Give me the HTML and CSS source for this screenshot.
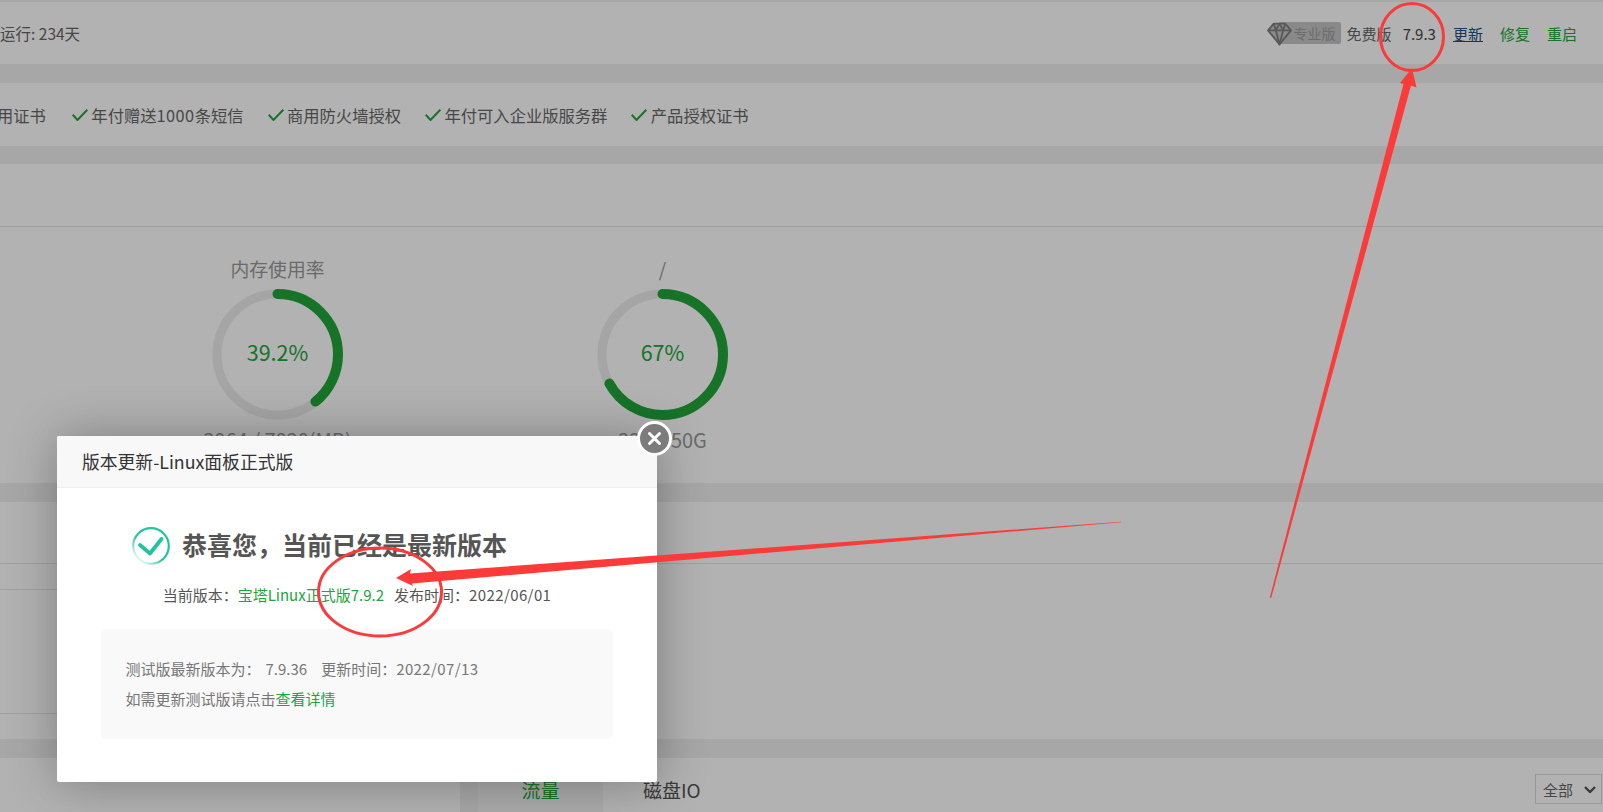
FILE: index.html
```html
<!DOCTYPE html>
<html lang="zh-CN">
<head>
<meta charset="utf-8">
<title>版本更新</title>
<link rel="stylesheet" href="styles.css">
</head>
<body>
<main class="page">
  <section class="card topbar">
    <span class="uptime">运行: 234天</span>
    <div class="status">
      <span class="pro">
        <svg class="pro-gem" width="25" height="25" viewBox="0 0 24 24" fill="#c4c4c4" stroke="#808080" stroke-width="1.8" stroke-linejoin="round"><path d="M6.5 2.5h11L23 9 12 22.5 1 9z"/><path d="M1 9h22M6.5 2.5 8.500 9 12 22.500 15.500 9l2-6.500M8.500 9 12 2.500 15.500 9" fill="none"/></svg>
        <span class="pro-label">专业版</span>
      </span>
      <span class="free">免费版</span>
      <span class="version">7.9.3</span>
      <a class="link update">更新</a>
      <a class="link green">修复</a>
      <a class="link green">重启</a>
    </div>
  </section>

  <section class="card features">
    <span class="feature">用证书</span>
    <span class="feature"><svg class="tick" width="16" height="12" viewBox="0 0 16 12"><path d="M.7 5.800 5.500 11 15.300.7"/></svg><span>年付赠送<span class="digits">1000</span>条短信</span></span>
    <span class="feature"><svg class="tick" width="16" height="12" viewBox="0 0 16 12"><path d="M.7 5.800 5.500 11 15.300.7"/></svg>商用防火墙授权</span>
    <span class="feature"><svg class="tick" width="16" height="12" viewBox="0 0 16 12"><path d="M.7 5.800 5.500 11 15.300.7"/></svg>年付可入企业版服务群</span>
    <span class="feature"><svg class="tick" width="16" height="12" viewBox="0 0 16 12"><path d="M.7 5.800 5.500 11 15.300.7"/></svg>产品授权证书</span>
  </section>

  <section class="card usage">
    <div class="card-head"></div>
    <div class="dials">
      <div class="dial">
        <div class="dial-title">内存使用率</div>
        <div class="ring">
          <svg width="131" height="131" viewBox="0 0 131 131"><circle class="ring-track" cx="65.500" cy="65.500" r="60.500"/><circle class="ring-value" cx="65.500" cy="65.500" r="60.500" pathLength="100" stroke-dasharray="39.2 100" transform="rotate(-90 65.500 65.500)"/></svg>
          <span class="ring-label">39.2%</span>
        </div>
        <div class="dial-foot">3064 / 7820(MB)</div>
      </div>
      <div class="dial">
        <div class="dial-title">/</div>
        <div class="ring">
          <svg width="131" height="131" viewBox="0 0 131 131"><circle class="ring-track" cx="65.500" cy="65.500" r="60.500"/><circle class="ring-value" cx="65.500" cy="65.500" r="60.500" pathLength="100" stroke-dasharray="67 100" transform="rotate(-90 65.500 65.500)"/></svg>
          <span class="ring-label">67%</span>
        </div>
        <div class="dial-foot">33G / 50G</div>
      </div>
    </div>
  </section>

  <section class="card software">
    <div class="software-head"></div>
    <div class="software-row first"></div>
    <div class="software-row second"></div>
  </section>

  <div class="bottom">
    <section class="card overview"></section>
    <section class="card traffic">
      <span class="tab active">流量</span>
      <span class="tab">磁盘IO</span>
      <span class="picker">全部<svg width="12" height="7" viewBox="0 0 12 7"><path d="M1 1l5 5 5-5"/></svg></span>
    </section>
  </div>
</main>

<div class="shade"></div>

<div class="dialog">
  <button class="dialog-close" type="button" aria-label="关闭">
    <svg width="35" height="35" viewBox="0 0 35 35"><circle cx="17.500" cy="17.500" r="16" fill="#7c7c7c" stroke="#fff" stroke-width="3"/><path d="M12.500 12.500l10 10M22.500 12.500l-10 10" stroke="#fff" stroke-width="3" stroke-linecap="round"/></svg>
  </button>
  <header class="dialog-head">版本更新-Linux面板正式版</header>
  <div class="dialog-body">
    <div class="result">
      <svg width="38" height="38" viewBox="0 0 38 38">
        <defs><linearGradient id="ringFade" x1="0.900" y1="0.100" x2="0.200" y2="0.900"><stop offset="0" stop-color="#20c4a0"/><stop offset="0.600" stop-color="#20c4a0"/><stop offset="1" stop-color="#20c4a0" stop-opacity="0.150"/></linearGradient></defs>
        <circle cx="19" cy="19" r="17.800" fill="none" stroke="url(#ringFade)" stroke-width="2.200"/>
        <path d="M8 18l10 8.500L29.500 12" fill="none" stroke="#20c4a0" stroke-width="3.800" stroke-linecap="round" stroke-linejoin="round"/>
      </svg>
      <h1 class="result-title">恭喜您，当前已经是最新版本</h1>
    </div>
    <p class="current">当前版本：<span class="accent">宝塔Linux正式版7.9.2</span><span class="published">发布时间：<span class="date">2022/06/01</span></span></p>
    <div class="beta">
      <p>测试版最新版本为：<span class="beta-num">7.9.36</span><span class="beta-time">更新时间：<span class="date">2022/07/13</span></span></p>
      <p>如需更新测试版请点击<a class="accent">查看详情</a></p>
    </div>
  </div>
</div>

<svg class="marks" width="1603" height="812" viewBox="0 0 1603 812">
  <ellipse cx="1412" cy="37" rx="31.500" ry="33.500"/>
  <ellipse cx="380" cy="592" rx="61.500" ry="44"/>
  <polygon points="1412,68 1416.500,87.500 1411,85.500 1271.200,598 1269.800,597.500 1403.500,84 1400,83"/>
  <polygon points="396,578 411,569 410,573.500 1121,521.800 1121,522.200 412,583.500 413,586"/>
</svg>
</body>
</html>
```
FILE: styles.css
```css
* { box-sizing: border-box; }
html, body { margin: 0; height: 100%; }
body {
  width: 1603px;
  height: 812px;
  overflow: hidden;
  position: relative;
  background: #f0f0f0;
  font-family: "Noto Sans CJK SC", "Liberation Sans", sans-serif;
  font-size: 15px;
  color: #666;
}
.page { padding-top: 2px; height: 812px; overflow: hidden; }
.card { background: #fff; }

.topbar {
  height: 62px;
  margin-bottom: 19px;
  display: flex;
  align-items: center;
  justify-content: space-between;
  padding-right: 26px;
}
.uptime { font-size: 15.500px; }
.status { display: flex; align-items: center; }
.pro { display: inline-flex; align-items: center; margin-right: 6px; }
.pro-gem { position: relative; z-index: 1; }
.pro-label {
  margin-left: -13px;
  padding: 0 5px 0 15px;
  height: 22px;
  line-height: 22px;
  font-size: 14px;
  color: #9c9c9c;
  background: #c4c4c4;
  border-radius: 2px;
}
.free { color: #666; }
.version { margin: 0 17px 0 11px; color: #444; }
.link { margin-right: 17px; }
.link:last-child { margin-right: 0; }
.update { color: #1f4f82; text-decoration: underline; }
.green { color: #20a53a; }

.features {
  height: 63px;
  margin-bottom: 18px;
  display: flex;
  align-items: center;
  gap: 24px;
  font-size: 16.300px;
}
.feature { display: inline-flex; align-items: center; gap: 3.500px; white-space: nowrap; }
.feature:first-child { margin-left: -3px; margin-right: 2px; }
.digits { letter-spacing: .5px; }
.tick { fill: none; stroke: #20a53a; stroke-width: 2; }

.usage { height: 319px; margin-bottom: 19px; }
.card-head { height: 63px; border-bottom: 1px solid #e6e6e6; }
.dials { display: flex; padding: 29px 0 0 85px; }
.dial { width: 385px; display: flex; flex-direction: column; align-items: center; color: #999; }
.dial-title { font-size: 18.800px; line-height: 26px; }
.ring { position: relative; width: 131px; height: 131px; margin-top: 7px; }
.ring svg { display: block; }
.ring-track { fill: none; stroke: #ececec; stroke-width: 9; }
.ring-value { fill: none; stroke: #20a53a; stroke-width: 10; stroke-linecap: round; }
.ring-label {
  position: absolute;
  inset: 0;
  padding-bottom: 6px;
  display: flex;
  align-items: center;
  justify-content: center;
  font-size: 21.500px;
  color: #20a53a;
}
.dial-foot { margin-top: 7px; font-size: 20px; line-height: 26px; }

.software { height: 237px; margin-bottom: 19px; }
.software-head { height: 62px; border-bottom: 1px solid #e6e6e6; }
.software-row { width: 420px; border-bottom: 1px solid #e6e6e6; }
.software-row.first { height: 26px; }
.software-row.second { height: 124px; }

.bottom { display: flex; gap: 18px; height: 54px; }
.overview { width: 460px; }
.traffic { flex: 1; display: flex; align-items: flex-start; }
.tab { display: block; height: 54px; line-height: 64px; padding: 0 40px; font-size: 19px; color: #555; }
.tab.active { width: 125px; padding: 0; text-align: center; color: #20a53a; background: #f5f5f5; }
.picker {
  margin: 16px 1px 0 auto;
  width: 67px;
  height: 30px;
  border: 1px solid #dcdcdc;
  display: flex;
  align-items: center;
  justify-content: space-between;
  padding: 0 5px 0 7px;
  color: #666;
}
.picker path { fill: none; stroke: #555; stroke-width: 2.400; }

.shade { position: absolute; inset: 0; z-index: 10; background: rgba(0, 0, 0, .3); }

.dialog {
  position: absolute;
  z-index: 11;
  left: 57px;
  top: 436px;
  width: 600px;
  height: 346px;
  background: #fff;
  border-radius: 2px;
  box-shadow: 1px 1px 50px rgba(0, 0, 0, .3);
}
.dialog-close {
  position: absolute;
  right: -15px;
  top: -15px;
  width: 35px;
  height: 35px;
  padding: 0;
  border: 0;
  background: none;
}
.dialog-close svg { display: block; }
.dialog-head {
  height: 52px;
  line-height: 51px;
  padding-left: 25px;
  font-size: 17.800px;
  color: #333;
  background: #f8f8f8;
  border-bottom: 1px solid #eee;
  border-radius: 2px 2px 0 0;
}
.dialog-body { padding-top: 39px; }
.result { display: flex; align-items: flex-start; gap: 12px; margin-left: 75px; height: 38px; }
.result svg { flex: none; }
.result-title { margin: 0; font-size: 25px; font-weight: 700; line-height: 34px; color: #555; }
.current { margin: 17px 0 0; height: 26px; line-height: 26px; text-align: center; color: #555; }
.accent { color: #20a53a; }
.published { margin-left: 10px; }
.date { letter-spacing: .4px; }
.beta {
  margin: 21px 44px 0 43.500px;
  height: 110px;
  padding: 25px 0 0 25px;
  background: #f9f9f9;
  border-radius: 5px;
  color: #777;
}
.beta p { margin: 0; height: 30px; line-height: 30px; }
.beta-num { margin-left: 5px; }
.beta-time { margin-left: 14px; }

.marks { position: absolute; left: 0; top: 0; z-index: 12; }
.marks ellipse { fill: none; stroke: #fb3a3a; stroke-width: 3; }
.marks polygon { fill: #fb3a3a; }
```
